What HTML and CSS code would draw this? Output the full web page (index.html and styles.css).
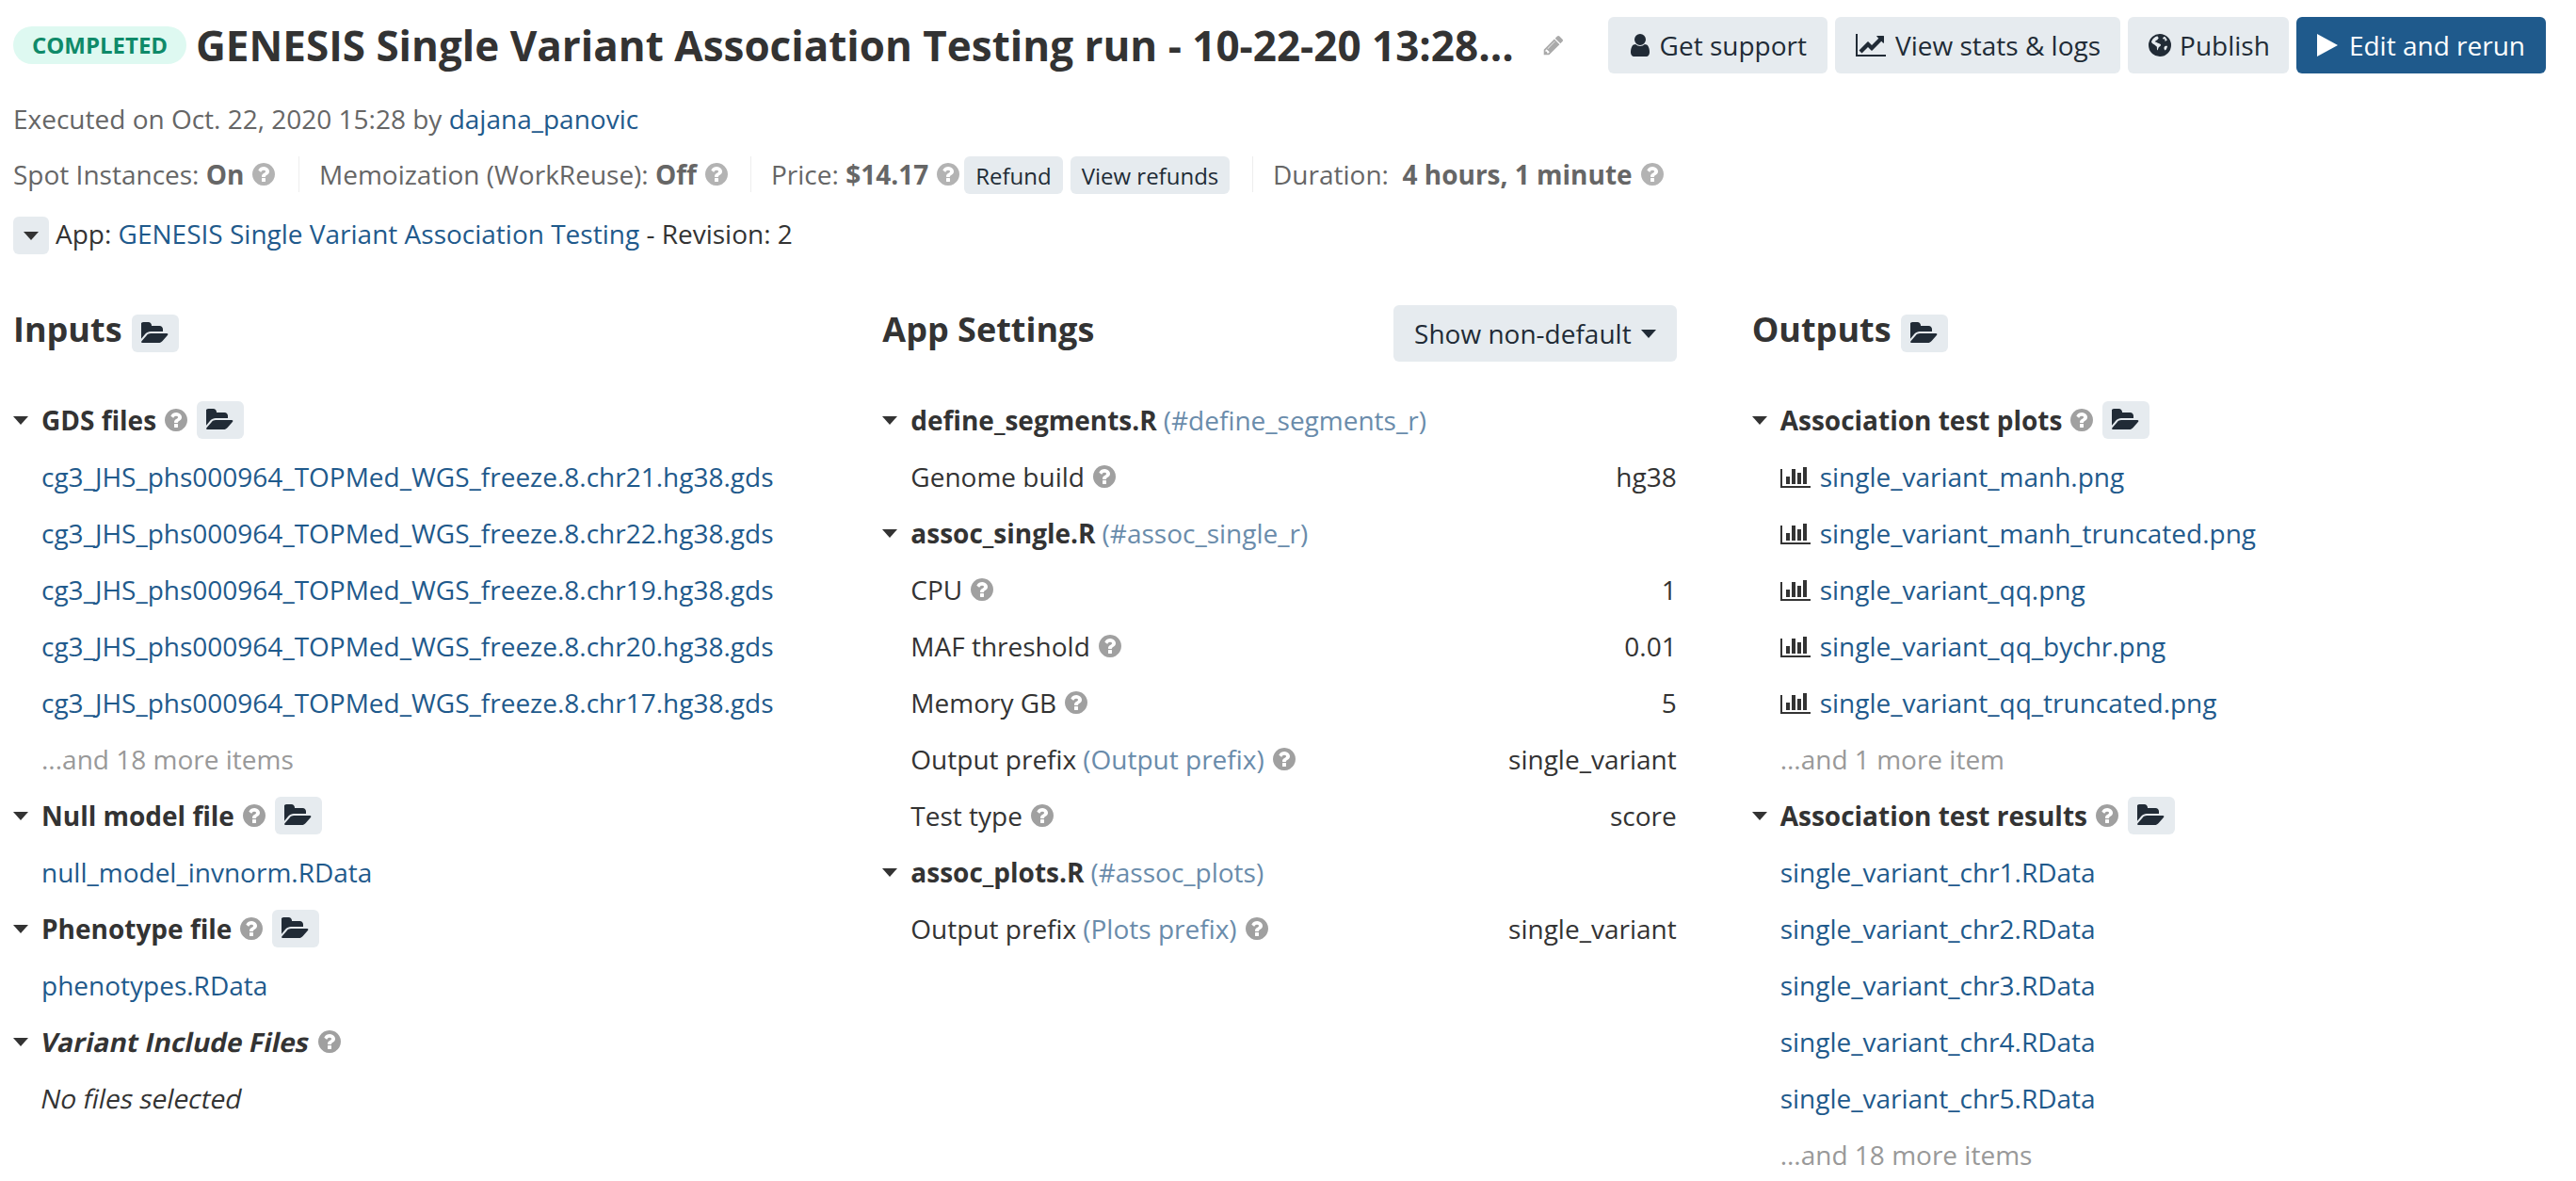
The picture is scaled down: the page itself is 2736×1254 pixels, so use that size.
FILE: index.html
```html
<!DOCTYPE html>
<html>
  <head>
    <title>GENESIS Single Variant Association Testing run</title>
    <link rel="stylesheet" href="styles.css">
  </head>
  <body>
    <svg class="icon-defs" width="0" height="0">
      <symbol id="i-folder" viewBox="0 0 1920 1792"><path d="M1815 952q0 31-31 66l-336 396q-43 51-120.5 86.5t-143.5 35.5h-1088q-34 0-60.5-13t-26.5-43q0-31 31-66l336-396q43-51 120.5-86.5t143.5-35.5h1088q34 0 60.5 13t26.5 43zm-343-344v160h-832q-94 0-197 47.5t-164 119.5l-337 396-5 6q0-4-.5-12.5t-.5-12.5v-960q0-92 66-158t158-66h320q92 0 158 66t66 158v32h544q92 0 158 66t66 158z"/></symbol>
      <symbol id="i-help" viewBox="0 0 1792 1792"><path d="M1024 1376v-192q0-14-9-23t-23-9h-192q-14 0-23 9t-9 23v192q0 14 9 23t23 9h192q14 0 23-9t9-23zm256-672q0-88-55.5-163t-138.5-116-170-41q-243 0-371 213-15 24 8 42l132 100q7 6 19 6 16 0 25-12 53-68 86-92 34-24 86-24 48 0 85.5 26t37.5 59q0 38-20 61t-68 45q-63 28-115.5 86.5t-52.5 125.5v36q0 14 9 23t23 9h192q14 0 23-9t9-23q0-19 21.5-49.5t54.5-49.5q32-18 49-28.5t46-35 44.5-48 28-60.5 12.5-81zm384 192q0 209-103 385.5t-279.5 279.5-385.5 103-385.5-103-279.5-279.5-103-385.5 103-385.5 279.5-279.5 385.5-103 385.5 103 279.5 279.5 103 385.5z"/></symbol>
      <symbol id="i-pencil" viewBox="0 0 1792 1792"><path d="M491 1536l91-91-235-235-91 91v107h128v128h107zm523-928q0-22-22-22-10 0-17 7l-542 542q-7 7-7 17 0 22 22 22 10 0 17-7l542-542q7-7 7-17zm-54-192l416 416-832 832h-416v-416zm683 96q0 53-37 90l-166 166-416-416 166-165q36-38 90-38 53 0 91 38l235 234q37 39 37 91z"/></symbol>
      <symbol id="i-user" viewBox="0 0 1408 1792"><path d="M1408 1399q0 109-62.5 187t-150.5 78h-854q-88 0-150.5-78t-62.500-187q0-85 8.500-160.500t31.500-152 58.500-131 94-89 134.500-34.500q131 128 313 128t313-128q76 0 134.500 34.500t94 89 58.500 131 31.500 152 8.500 160.500zm-256-887q0 159-112.500 271.500t-271.500 112.500-271.500-112.500-112.500-271.500 112.500-271.500 271.500-112.500 271.500 112.500 112.500 271.500z"/></symbol>
      <symbol id="i-chart" viewBox="0 0 2048 1792"><path d="M2048 1536v128h-2048v-1536h128v1408h1920zm-128-1248v435q0 21-19.500 29.500t-35.500-7.500l-121-121-633 633q-10 10-23 10t-23-10l-233-233-416 416-192-192 585-585q10-10 23-10t23 10l233 233 464-464-121-121q-16-16-7.500-35.500t29.500-19.500h435q14 0 23 9t9 23z"/></symbol>
      <symbol id="i-bars" viewBox="0 0 2048 1792"><path d="M640 896v512h-256v-512h256zm384-512v1024h-256v-1024h256zm1024 1152v128h-2048v-1280h128v1152h1920zm-640-896v768h-256v-768h256zm384-384v1152h-256v-1152h256z"/></symbol>
      <symbol id="i-globe" viewBox="0 0 24 28"><path fill-rule="evenodd" d="M12 2a12 12 0 1 1 0 24a12 12 0 0 1 0-24zM9 4.500c-3 .8-5.500 3.500-6 6.500c1 .6 1.500 1.800 2.800 2.200c1.400.4 1.600 1.800 3 2.300c.4 1.500-.3 2.800.7 4c.8-1 .5-2.500 1.600-3.500c1-1 2.300-1.600 1.700-3c-1.200-.9-2.600-1-3.800-1.800c-.6-.8-1.400-1-2.200-.6c.2-1.400 1.500-1.600 2.600-2.300c.7-.5.700-1.500 1.400-2c-.6-.6-1.200-1.500-1.800-2.300zM17 4.800c-.8.800-2 1-2 2.200c.9.300 1.600.9 2.400.4c.5.800-.4 1.300-.2 2c1 .3 1.800-.5 2.500-.7c-.6-1.600-1.500-3-2.700-3.900zM20 15c-1.400-.3-2.800-.2-3.400 1.200c-.5 1.300.2 2.600 1 3.400c1.300-1.100 2.200-2.800 2.400-4.600z"/></symbol>
    </svg>

    <div class="page">
      <header class="top-bar">
        <span class="status-badge">COMPLETED</span>
        <h1 class="run-title">GENESIS Single Variant Association Testing run - 10-22-20 13:28...</h1>
        <svg class="icon pencil"><use href="#i-pencil"/></svg>
        <div class="top-actions">
          <a class="btn btn-support"><svg class="icon btn-icon user"><use href="#i-user"/></svg>Get support</a>
          <a class="btn btn-stats"><svg class="icon btn-icon chart"><use href="#i-chart"/></svg>View stats &amp; logs</a>
          <a class="btn btn-publish"><svg class="icon btn-icon globe"><use href="#i-globe"/></svg>Publish</a>
          <a class="btn btn-primary"><svg class="play" viewBox="0 0 22 24"><polygon points="0,0 22,12 0,24"/></svg>Edit and rerun</a>
        </div>
      </header>

      <p class="executed">Executed on Oct. 22, 2020 15:28 by <a class="link">dajana_panovic</a></p>

      <div class="stats">
        <div class="stat stat-spot">Spot Instances:&nbsp;<b>On</b><svg class="icon help"><use href="#i-help"/></svg></div>
        <div class="stat stat-memo">Memoization (WorkReuse):&nbsp;<b>Off</b><svg class="icon help"><use href="#i-help"/></svg></div>
        <div class="stat stat-price">Price:&nbsp;<b>$14.17</b><svg class="icon help"><use href="#i-help"/></svg><a class="btn-small">Refund</a><a class="btn-small">View refunds</a></div>
        <div class="stat">Duration:&nbsp;&nbsp;<b>4 hours, 1 minute</b><svg class="icon help"><use href="#i-help"/></svg></div>
      </div>

      <div class="app-line">
        <span class="caret-btn"><i class="caret"></i></span>
        <span class="app-text">App: <a class="link">GENESIS Single Variant Association Testing</a> - Revision: 2</span>
      </div>

      <main class="columns">
        <section>
          <div class="col-head">
            <h2>Inputs</h2>
            <span class="folder-btn"><svg class="icon folder"><use href="#i-folder"/></svg></span>
          </div>
          <div class="row group"><i class="caret"></i><b>GDS files</b><svg class="icon help"><use href="#i-help"/></svg><span class="folder-btn"><svg class="icon folder"><use href="#i-folder"/></svg></span></div>
          <div class="row item"><a class="link">cg3_JHS_phs000964_TOPMed_WGS_freeze.8.chr21.hg38.gds</a></div>
          <div class="row item"><a class="link">cg3_JHS_phs000964_TOPMed_WGS_freeze.8.chr22.hg38.gds</a></div>
          <div class="row item"><a class="link">cg3_JHS_phs000964_TOPMed_WGS_freeze.8.chr19.hg38.gds</a></div>
          <div class="row item"><a class="link">cg3_JHS_phs000964_TOPMed_WGS_freeze.8.chr20.hg38.gds</a></div>
          <div class="row item"><a class="link">cg3_JHS_phs000964_TOPMed_WGS_freeze.8.chr17.hg38.gds</a></div>
          <div class="row item more">...and 18 more items</div>
          <div class="row group"><i class="caret"></i><b>Null model file</b><svg class="icon help"><use href="#i-help"/></svg><span class="folder-btn"><svg class="icon folder"><use href="#i-folder"/></svg></span></div>
          <div class="row item"><a class="link">null_model_invnorm.RData</a></div>
          <div class="row group"><i class="caret"></i><b>Phenotype file</b><svg class="icon help"><use href="#i-help"/></svg><span class="folder-btn"><svg class="icon folder"><use href="#i-folder"/></svg></span></div>
          <div class="row item"><a class="link">phenotypes.RData</a></div>
          <div class="row group"><i class="caret"></i><b class="slanted">Variant Include Files</b><svg class="icon help"><use href="#i-help"/></svg></div>
          <div class="row item"><span class="slanted">No files selected</span></div>
        </section>

        <section>
          <div class="col-head">
            <h2>App Settings</h2>
            <a class="btn show-btn">Show non-default<i class="caret"></i></a>
          </div>
          <div class="row group"><i class="caret"></i><b>define_segments.R</b><span class="step-id">(#define_segments_r)</span></div>
          <div class="row item setting"><span>Genome build</span><svg class="icon help"><use href="#i-help"/></svg><span class="value">hg38</span></div>
          <div class="row group"><i class="caret"></i><b>assoc_single.R</b><span class="step-id">(#assoc_single_r)</span></div>
          <div class="row item setting"><span>CPU</span><svg class="icon help"><use href="#i-help"/></svg><span class="value">1</span></div>
          <div class="row item setting"><span>MAF threshold</span><svg class="icon help"><use href="#i-help"/></svg><span class="value">0.01</span></div>
          <div class="row item setting"><span>Memory GB</span><svg class="icon help"><use href="#i-help"/></svg><span class="value">5</span></div>
          <div class="row item setting"><span>Output prefix</span><span class="step-id">(Output prefix)</span><svg class="icon help"><use href="#i-help"/></svg><span class="value">single_variant</span></div>
          <div class="row item setting"><span>Test type</span><svg class="icon help"><use href="#i-help"/></svg><span class="value">score</span></div>
          <div class="row group"><i class="caret"></i><b>assoc_plots.R</b><span class="step-id">(#assoc_plots)</span></div>
          <div class="row item setting"><span>Output prefix</span><span class="step-id">(Plots prefix)</span><svg class="icon help"><use href="#i-help"/></svg><span class="value">single_variant</span></div>
        </section>

        <section>
          <div class="col-head">
            <h2>Outputs</h2>
            <span class="folder-btn"><svg class="icon folder"><use href="#i-folder"/></svg></span>
          </div>
          <div class="row group"><i class="caret"></i><b>Association test plots</b><svg class="icon help"><use href="#i-help"/></svg><span class="folder-btn"><svg class="icon folder"><use href="#i-folder"/></svg></span></div>
          <div class="row item"><svg class="icon bars"><use href="#i-bars"/></svg><a class="link">single_variant_manh.png</a></div>
          <div class="row item"><svg class="icon bars"><use href="#i-bars"/></svg><a class="link">single_variant_manh_truncated.png</a></div>
          <div class="row item"><svg class="icon bars"><use href="#i-bars"/></svg><a class="link">single_variant_qq.png</a></div>
          <div class="row item"><svg class="icon bars"><use href="#i-bars"/></svg><a class="link">single_variant_qq_bychr.png</a></div>
          <div class="row item"><svg class="icon bars"><use href="#i-bars"/></svg><a class="link">single_variant_qq_truncated.png</a></div>
          <div class="row item more">...and 1 more item</div>
          <div class="row group"><i class="caret"></i><b>Association test results</b><svg class="icon help"><use href="#i-help"/></svg><span class="folder-btn"><svg class="icon folder"><use href="#i-folder"/></svg></span></div>
          <div class="row item"><a class="link">single_variant_chr1.RData</a></div>
          <div class="row item"><a class="link">single_variant_chr2.RData</a></div>
          <div class="row item"><a class="link">single_variant_chr3.RData</a></div>
          <div class="row item"><a class="link">single_variant_chr4.RData</a></div>
          <div class="row item"><a class="link">single_variant_chr5.RData</a></div>
          <div class="row item more">...and 18 more items</div>
        </section>
      </main>
    </div>
  </body>
</html>
```

FILE: styles.css
```css
html, body {
  margin: 0;
  height: 1254px;
  overflow: hidden;
  background: #fff;
}
body {
  font-family: "Open Sans", "Noto Sans", sans-serif;
  font-size: 28px;
  line-height: 40px;
  color: #333;
}
.icon-defs {
  position: absolute;
}
.page {
  padding: 18px 32px 0 14px;
}
.icon {
  fill: currentColor;
  flex: none;
}
.link {
  color: #1f5a8c;
}

/* top bar */
.top-bar {
  display: flex;
  align-items: center;
  height: 60px;
}
.status-badge {
  width: 184px;
  height: 40px;
  line-height: 40px;
  text-align: center;
  background: #def9f1;
  color: #0f8a69;
  border-radius: 20px;
  font-size: 24px;
  font-weight: 700;
}
.run-title {
  margin: 0 0 0 10px;
  font-size: 44px;
  line-height: 60px;
  font-weight: 700;
  white-space: nowrap;
}
.pencil {
  width: 24px;
  height: 24px;
  margin-left: 30px;
  color: #aaa;
}
.top-actions {
  display: flex;
  gap: 8px;
  margin-left: auto;
}
.btn {
  display: flex;
  align-items: center;
  height: 60px;
  padding: 0 22px;
  background: #e6ebef;
  color: #212b36;
  border-radius: 6px;
  white-space: nowrap;
}
.btn-icon {
  margin-right: 9px;
}
.btn-support .btn-icon {
  margin-right: 11px;
}
.btn-stats {
  padding-right: 21px;
}
.btn-stats .btn-icon {
  margin-right: 10px;
}
.btn-publish {
  padding-right: 20px;
}
.user {
  width: 22px;
  height: 28px;
}
.chart {
  width: 32px;
  height: 28px;
}
.globe {
  width: 24px;
  height: 28px;
}
.btn-primary {
  background: #1f5a8c;
  color: #fff;
}
.play {
  width: 22px;
  height: 24px;
  margin-right: 12px;
  fill: #fff;
}

/* meta lines */
.executed {
  margin: 28px 0 0;
  color: #666;
}
.stats {
  display: flex;
  align-items: flex-start;
  height: 42px;
  margin-top: 20px;
  color: #666;
}
.stat {
  display: flex;
  align-items: center;
  height: 38px;
  padding-left: 21px;
  border-left: 1px solid #eee;
  white-space: nowrap;
}
.stat b {
  font-weight: 700;
}
.stat .help {
  color: #b3b3b3;
}
.stat-spot {
  width: 303px;
  padding-left: 0;
  border-left: 0;
}
.stat-memo {
  width: 458px;
}
.stat-price {
  width: 511px;
}
.btn-small {
  display: block;
  height: 40px;
  line-height: 42px;
  margin-left: 8px;
  margin-top: 2px;
  padding: 0 12px;
  background: #e6ebef;
  color: #212b36;
  border-radius: 6px;
  font-size: 24px;
}
.help {
  width: 28px;
  height: 28px;
  margin-left: 7px;
  color: #a0a0a0;
}
.btn-small:first-of-type {
  margin-left: 3px;
}
.app-line {
  display: flex;
  align-items: center;
  height: 40px;
  margin-top: 22px;
}
.app-text {
  padding-bottom: 5px;
}
.caret {
  display: inline-block;
  flex: none;
  border-left: 8px solid transparent;
  border-right: 8px solid transparent;
  border-top: 9px solid #333;
}
.caret-btn {
  display: flex;
  align-items: center;
  justify-content: center;
  width: 38px;
  height: 40px;
  margin-right: 7px;
  background: #e6ebef;
  border-radius: 6px;
}

/* three columns */
.columns {
  display: grid;
  grid-template-columns: repeat(3, 1fr);
  column-gap: 80px;
  margin-top: 54px;
}
.col-head {
  display: flex;
  align-items: center;
  height: 60px;
  margin-bottom: 32px;
}
.col-head h2 {
  margin: 0;
  padding-bottom: 8px;
  font-size: 36px;
  line-height: 52px;
  font-weight: 700;
}
.folder-btn {
  display: flex;
  align-items: center;
  justify-content: center;
  width: 50px;
  height: 40px;
  margin-left: 8px;
  background: #e6ebef;
  color: #212b36;
  border-radius: 6px;
}
.col-head .folder-btn {
  margin-left: 10px;
}
.folder {
  width: 30px;
  height: 28px;
}
.show-btn {
  margin-left: auto;
}
.show-btn .caret {
  margin-left: 10px;
  border-top-color: #212b36;
}
.row {
  display: flex;
  align-items: center;
  height: 60px;
  white-space: nowrap;
}
.group .caret {
  margin-right: 14px;
}
.group b {
  font-weight: 700;
}
.slanted {
  display: inline-block;
  transform: skewX(-12deg);
}
.item {
  padding-left: 30px;
}
.more {
  color: #999;
}
.step-id {
  margin-left: 7px;
  color: #6a8cab;
}
.value {
  margin-left: auto;
}
.bars {
  width: 32px;
  height: 28px;
  margin-right: 10px;
}
```
